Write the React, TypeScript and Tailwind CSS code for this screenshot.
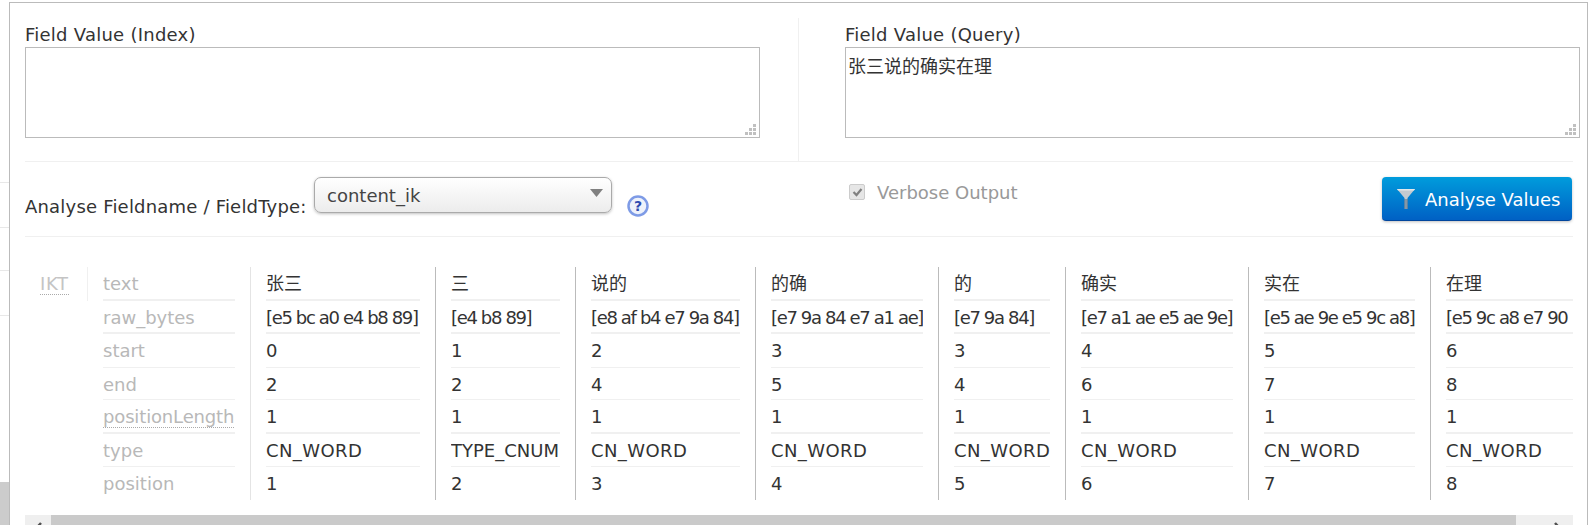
const FONT = "font-['DejaVu_Sans','Noto_Sans_CJK_SC',sans-serif]";

const keys = [
  { name: 'text', row: 'h-[34px] border-b-2' },
  { name: 'raw_bytes', row: 'h-[33px] border-b-2' },
  { name: 'start', row: 'h-[34px] border-b' },
  { name: 'end', row: 'h-[32px] border-b' },
  { name: 'positionLength', row: 'h-[34px] border-b-2', abbr: true },
  { name: 'type', row: 'h-[33px] border-b' },
  { name: 'position', row: 'h-[33px]' },
];

const tokens = [
  { w: 'w-[185px]', values: ['张三', '[e5 bc a0 e4 b8 89]', '0', '2', '1', 'CN_WORD', '1'] },
  { w: 'w-[140px]', values: ['三', '[e4 b8 89]', '1', '2', '1', 'TYPE_CNUM', '2'] },
  { w: 'w-[180px]', values: ['说的', '[e8 af b4 e7 9a 84]', '2', '4', '1', 'CN_WORD', '3'] },
  { w: 'w-[183px]', values: ['的确', '[e7 9a 84 e7 a1 ae]', '3', '5', '1', 'CN_WORD', '4'] },
  { w: 'w-[127px]', values: ['的', '[e7 9a 84]', '3', '4', '1', 'CN_WORD', '5'] },
  { w: 'w-[183px]', values: ['确实', '[e7 a1 ae e5 ae 9e]', '4', '6', '1', 'CN_WORD', '6'] },
  { w: 'w-[182px]', values: ['实在', '[e5 ae 9e e5 9c a8]', '5', '7', '1', 'CN_WORD', '7'] },
  { w: 'w-[157px]', values: ['在理', '[e5 9c a8 e7 90', '6', '8', '1', 'CN_WORD', '8'] },
];

function Grip() {
  return (
    <svg className="absolute right-[3px] bottom-[2px]" width="11" height="11" viewBox="0 0 11 11" fill="#c0c0c0">
      <rect x="8" y="0" width="3" height="3" />
      <rect x="8" y="4" width="3" height="3" />
      <rect x="4" y="4" width="3" height="3" />
      <rect x="8" y="8" width="3" height="3" />
      <rect x="4" y="8" width="3" height="3" />
      <rect x="0" y="8" width="3" height="3" />
    </svg>
  );
}

function FieldValue({ label, value, className }: { label: string; value?: string; className: string }) {
  return (
    <div className={className}>
      <div className="h-[29px] text-[18px] leading-[34px] tracking-[0.25px] text-[#333]">{label}</div>
      <div className="relative h-[91px] border border-[#bbb] bg-white px-[2px] pt-[7px] text-[18px] leading-[24px] text-[#333]">
        {value}
        <Grip />
      </div>
    </div>
  );
}

export default function App() {
  return (
    <div className={`${FONT} flex h-[525px] w-[1595px] overflow-hidden bg-white`}>
      {/* Page behind the panel */}
      <div className="flex w-[9px] shrink-0 flex-col pt-[182px]">
        <div className="h-[45px] border-t border-[#e8e8e8]" />
        <div className="h-[43px] border-t border-[#e8e8e8]" />
        <div className="h-[45px] border-t border-[#e8e8e8]" />
        <div className="h-[167px] border-t border-[#e8e8e8]" />
        <div className="flex-1 bg-[#ccc]" />
      </div>

      <div className="mt-[2px] h-[600px] w-[1579px] shrink-0 border-t border-r border-l border-[#bbb] bg-white pt-[15px] pl-[15px]">
        {/* Field values */}
        <div className="flex h-[144px] w-[1548px] border-b border-[#f0f0f0]">
          <FieldValue label="Field Value (Index)" className="w-[774px] shrink-0 border-r border-[#f0f0f0] pr-[38px]" />
          <FieldValue label="Field Value (Query)" value="张三说的确实在理" className="ml-[46px] w-[735px] shrink-0" />
        </div>

        {/* Analyse controls */}
        <div className="flex h-[75px] w-[1548px] border-b border-[#f0f0f0]">
          <div className="mt-[33px] w-[289px] text-[18px] leading-[24px] tracking-[0.2px] whitespace-nowrap text-[#333]">
            Analyse Fieldname / FieldType:
          </div>
          <div className="mt-[15px] flex h-[36px] w-[298px] items-center justify-between rounded-[7px] border border-[#aaa] bg-gradient-to-b from-white to-[#ececec] pr-[8px] pl-[12px] text-[18px] text-[#444] shadow-[0_1px_3px_rgba(0,0,0,0.25)]">
            <span className="mt-[1px]">content_ik</span>
            <svg width="13" height="8" viewBox="0 0 13 8" className="-mt-[5px]">
              <path d="M0 0H13L6.5 8Z" fill="#808080" />
            </svg>
          </div>
          <svg width="22" height="22" viewBox="0 0 22 22" className="mt-[33px] ml-[15px]">
            <circle cx="11" cy="11" r="9.5" fill="#eef2fb" stroke="#7e9be6" strokeWidth="2.5" />
            <text x="11" y="16" textAnchor="middle" fontSize="14" fontWeight="700" fill="#2f4bb0">?</text>
          </svg>
          <div className="mt-[20px] ml-[200px] flex h-[20px] w-[533px] items-center text-[18px] text-[#999]">
            <span className="mr-[12px] flex h-[16px] w-[16px] items-center justify-center rounded-[2px] border border-[#ccc] bg-[#e6e6e6]">
              <svg width="11" height="10" viewBox="0 0 11 10" fill="none" stroke="#808080" strokeWidth="2.2">
                <path d="M1.5 5L4.5 8L9.5 2" />
              </svg>
            </span>
            Verbose Output
          </div>
          <button className="mt-[15px] flex h-[44px] w-[190px] items-center rounded-[4px] border-b border-[#00459c] bg-gradient-to-b from-[#009cdc] to-[#0060c4] pt-[1px] pl-[14px] text-[18px] whitespace-nowrap text-white shadow-[0_1px_3px_rgba(0,0,0,0.25)]">
            <svg width="20" height="24" viewBox="0 0 20 24" className="mr-[9px]">
              <path d="M1 2H19L11.5 11V22H8.5V11Z" fill="#c2cad0" />
              <path d="M1 2H19L18 3.5H2Z" fill="#e4e8ea" />
              <path d="M8.5 12H11.5V22H8.5Z" fill="#51697f" />
              <path d="M9.4 12H10.6V22H9.4Z" fill="#a9b6c0" />
            </svg>
            Analyse Values
          </button>
        </div>

        {/* Analysis table */}
        <div className="mt-[30px] flex h-[233px] w-[1548px] overflow-hidden text-[18px] leading-[34px] whitespace-nowrap">
          <div className="h-[34px] w-[63px] shrink-0 border-r border-[#f0f0f0] pl-[15px] tracking-[0.6px] text-[#c4c4c4]">
            <span className="border-b border-dotted border-[#aaa] leading-[20px]">IKT</span>
          </div>
          <div className="w-[163px] shrink-0 border-r border-[#e4e4e4] px-[15px] text-[#b8b8b8]">
            {keys.map((k) => (
              <div key={k.name} className={`overflow-hidden border-[#f0f0f0] ${k.row}`}>
                {k.abbr ? <span className="border-b border-dotted border-[#aaa] leading-[20px] tracking-[-0.15px]">{k.name}</span> : k.name}
              </div>
            ))}
          </div>
          {tokens.map((t) => (
            <div key={t.values[1]} className={`${t.w} shrink-0 overflow-hidden border-r border-[#bbb] pl-[15px] text-[#333] last:border-r-0`}>
              <div className="w-[calc(100%-15px)]">
                {t.values.map((v, i) => (
                  <div
                    key={i}
                    className={`overflow-hidden border-[#f0f0f0] ${keys[i].row} ${i === 1 ? 'tracking-[-1.35px]' : ''} ${v === 'CN_WORD' ? 'tracking-[0.4px]' : ''}`}
                  >
                    {v}
                  </div>
                ))}
              </div>
            </div>
          ))}
        </div>

        {/* Horizontal scrollbar */}
        <div className="mt-[15px] flex h-[24px] w-[1548px] bg-[#efefef]">
          <div className="flex w-[26px] justify-center pt-[7px]">
            <svg width="9" height="13" viewBox="0 0 9 13" fill="none" stroke="#505050" strokeWidth="2.5">
              <path d="M7 1L2 6.5L7 12" />
            </svg>
          </div>
          <div className="w-[1465px] bg-[#cacaca]" />
          <div className="flex flex-1 justify-center pt-[7px] pl-[26px]">
            <svg width="9" height="13" viewBox="0 0 9 13" fill="none" stroke="#505050" strokeWidth="2.5">
              <path d="M2 1L7 6.5L2 12" />
            </svg>
          </div>
        </div>
      </div>
    </div>
  );
}
